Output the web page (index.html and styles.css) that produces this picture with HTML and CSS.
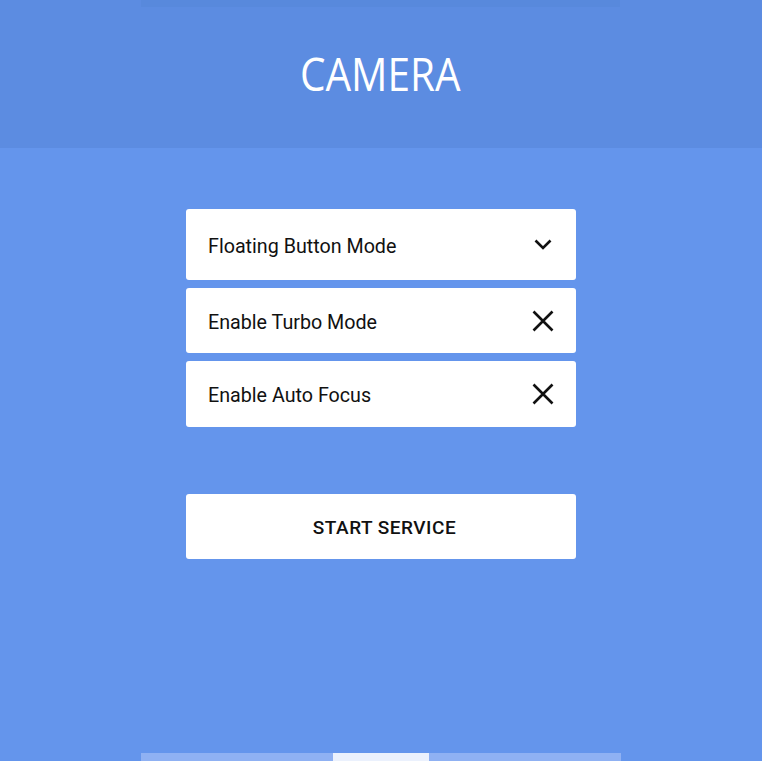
FILE: index.html
```html
<!DOCTYPE html>
<html>
<head>
<meta charset="utf-8">
<link rel="stylesheet" href="styles.css">
</head>
<body>
<div class="page">
  <header class="header">
    <div class="header-inner">
      <div class="header-shadow"></div>
      <h1 class="title">CAMERA</h1>
    </div>
  </header>
  <main class="content">
    <div class="card card-tall">
      <span class="label">Floating Button Mode</span>
      <svg class="icon chevron" width="18" height="11" viewBox="0 0 18 11"><path d="M1.5 1.5 L9 9 L16.5 1.5" fill="none" stroke="#111" stroke-width="2.6"/></svg>
    </div>
    <div class="card card-short">
      <span class="label">Enable Turbo Mode</span>
      <svg class="icon" width="22" height="22" viewBox="0 0 22 22"><path d="M1.5 1.5 L20.5 20.5 M20.5 1.5 L1.5 20.5" fill="none" stroke="#111" stroke-width="2.6"/></svg>
    </div>
    <div class="card">
      <span class="label">Enable Auto Focus</span>
      <svg class="icon" width="22" height="22" viewBox="0 0 22 22"><path d="M1.5 1.5 L20.5 20.5 M20.5 1.5 L1.5 20.5" fill="none" stroke="#111" stroke-width="2.6"/></svg>
    </div>
    <button class="start">START SERVICE</button>
  </main>
  <nav class="tabs">
    <div class="tab"></div>
    <div class="tab tab-active"></div>
    <div class="tab"></div>
  </nav>
</div>
</body>
</html>
```
FILE: styles.css
```css
* { box-sizing: border-box; }
html, body { margin: 0; padding: 0; }
body {
  background: #6495ec;
  font-family: Roboto, "Liberation Sans", sans-serif;
}
.page {
  min-height: 761px;
  display: flex;
  flex-direction: column;
}
.header {
  height: 148px;
  background: #5c8ce1;
  display: flex;
  justify-content: center;
}
.header-inner {
  width: 479px;
  margin-left: -1px;
  display: flex;
  flex-direction: column;
  align-items: center;
}
.header-shadow {
  align-self: stretch;
  height: 7px;
  background: #5889dc;
}
.title {
  margin: 38px 0 0 0;
  font-family: "Open Sans", sans-serif;
  font-weight: 400;
  font-size: 46px;
  line-height: 56px;
  color: #ffffff;
  transform: scaleX(0.88);
}
.content {
  width: 390px;
  margin: 61px auto 0 auto;
  display: flex;
  flex-direction: column;
  gap: 8px;
}
.card {
  height: 66px;
  background: #ffffff;
  border-radius: 3px;
  display: flex;
  align-items: center;
  justify-content: space-between;
  padding: 0 22px 0 22px;
}
.card-tall { height: 71px; }
.card-short { height: 65px; }
.label {
  font-size: 19.7px;
  color: #111111;
  padding-top: 3px;
}
.icon { display: block; }
.chevron { margin-right: 2px; }
.start {
  margin-top: 59px;
  height: 65px;
  border: none;
  border-radius: 3px;
  background: #ffffff;
  font-family: Roboto, "Liberation Sans", sans-serif;
  font-weight: 500;
  font-size: 19px;
  letter-spacing: 0.5px;
  color: #111111;
  padding: 2px 0 0 7px;
}
.tabs {
  margin: auto auto 0 auto;
  width: 480px;
  height: 8px;
  display: flex;
}
.tab {
  flex: 2;
  background: #8fb1f3;
}
.tab-active {
  flex: 1;
  background: #ebf1fd;
}
```
